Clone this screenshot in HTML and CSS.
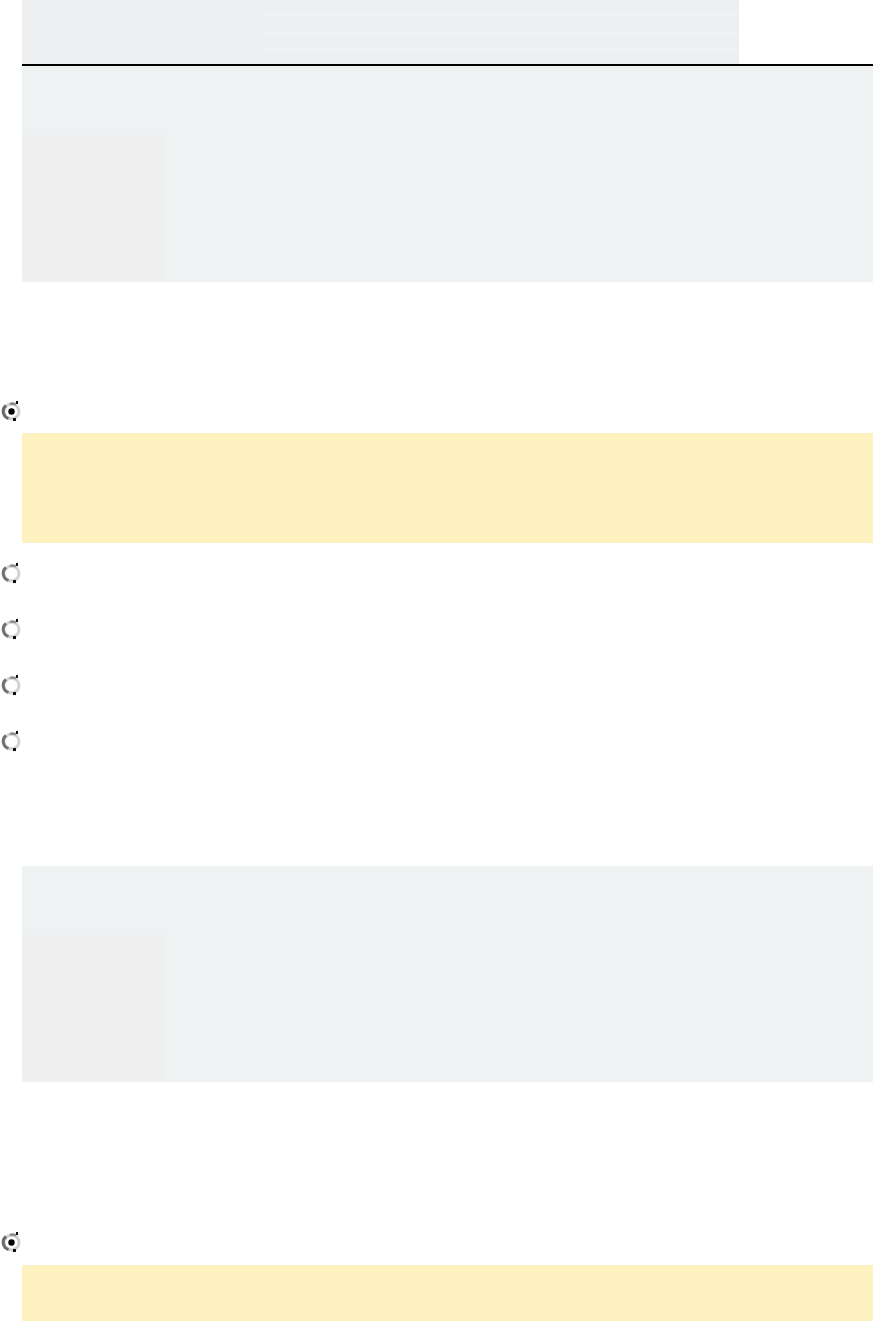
FILE: index.html
```html
<!DOCTYPE html>
<html lang="en">
<head>
<meta charset="utf-8">
<title>Page</title>
<link rel="stylesheet" href="styles.css">
</head>
<body>
<div class="page">
  <div class="top">
    <div class="top-left"></div>
    <div class="top-rows">
      <div class="top-row"></div>
      <div class="top-row"></div>
      <div class="top-row"></div>
      <div class="top-row last"></div>
    </div>
  </div>
  <div class="rule"></div>

  <div class="panel"><div class="thumb"></div></div>

  <div class="radio-row first">
    <svg class="radio" viewBox="0 0 20 20" width="20" height="20"><circle cx="10.5" cy="10.5" r="7.5" fill="#fff" stroke="#cfcfcf" stroke-width="3"/><path d="M5 4.5 A7.5 7.5 0 0 0 7.5 17.5" fill="none" stroke="#6a6a6a" stroke-width="3"/><path d="M15 3.5 A7.5 7.5 0 0 0 9 3" fill="none" stroke="#8a8a8a" stroke-width="2.5"/><circle cx="10.5" cy="10.5" r="3.2" fill="#000"/><rect x="15" y="0" width="2" height="3" fill="#111"/><rect x="12" y="17" width="3" height="3" fill="#111"/></svg>
  </div>
  <div class="note"></div>

  <div class="radio-list">
    <div class="radio-row"><svg class="radio" viewBox="0 0 20 20" width="20" height="20"><circle cx="10.5" cy="10.5" r="7.5" fill="#fff" stroke="#d2d2d2" stroke-width="3"/><path d="M5 4.5 A7.5 7.5 0 0 0 7.5 17.5" fill="none" stroke="#727272" stroke-width="3"/><path d="M15 3.5 A7.5 7.5 0 0 0 9 3" fill="none" stroke="#8e8e8e" stroke-width="2.5"/><rect x="15" y="0" width="2" height="3" fill="#111"/><rect x="12" y="17" width="3" height="3" fill="#111"/></svg></div>
    <div class="radio-row"><svg class="radio" viewBox="0 0 20 20" width="20" height="20"><circle cx="10.5" cy="10.5" r="7.5" fill="#fff" stroke="#d2d2d2" stroke-width="3"/><path d="M5 4.5 A7.5 7.5 0 0 0 7.5 17.5" fill="none" stroke="#727272" stroke-width="3"/><path d="M15 3.5 A7.5 7.5 0 0 0 9 3" fill="none" stroke="#8e8e8e" stroke-width="2.5"/><rect x="15" y="0" width="2" height="3" fill="#111"/><rect x="12" y="17" width="3" height="3" fill="#111"/></svg></div>
    <div class="radio-row"><svg class="radio" viewBox="0 0 20 20" width="20" height="20"><circle cx="10.5" cy="10.5" r="7.5" fill="#fff" stroke="#d2d2d2" stroke-width="3"/><path d="M5 4.5 A7.5 7.5 0 0 0 7.5 17.5" fill="none" stroke="#727272" stroke-width="3"/><path d="M15 3.5 A7.5 7.5 0 0 0 9 3" fill="none" stroke="#8e8e8e" stroke-width="2.5"/><rect x="15" y="0" width="2" height="3" fill="#111"/><rect x="12" y="17" width="3" height="3" fill="#111"/></svg></div>
    <div class="radio-row"><svg class="radio" viewBox="0 0 20 20" width="20" height="20"><circle cx="10.5" cy="10.5" r="7.5" fill="#fff" stroke="#d2d2d2" stroke-width="3"/><path d="M5 4.5 A7.5 7.5 0 0 0 7.5 17.5" fill="none" stroke="#727272" stroke-width="3"/><path d="M15 3.5 A7.5 7.5 0 0 0 9 3" fill="none" stroke="#8e8e8e" stroke-width="2.5"/><rect x="15" y="0" width="2" height="3" fill="#111"/><rect x="12" y="17" width="3" height="3" fill="#111"/></svg></div>
  </div>

  <div class="panel second"><div class="thumb"></div></div>

  <div class="radio-row third">
    <svg class="radio" viewBox="0 0 20 20" width="20" height="20"><circle cx="10.5" cy="10.5" r="7.5" fill="#fff" stroke="#cfcfcf" stroke-width="3"/><path d="M5 4.5 A7.5 7.5 0 0 0 7.5 17.5" fill="none" stroke="#6a6a6a" stroke-width="3"/><path d="M15 3.5 A7.5 7.5 0 0 0 9 3" fill="none" stroke="#8a8a8a" stroke-width="2.5"/><circle cx="10.5" cy="10.5" r="3.2" fill="#000"/><rect x="15" y="0" width="2" height="3" fill="#111"/><rect x="12" y="17" width="3" height="3" fill="#111"/></svg>
  </div>
  <div class="note last"></div>
</div>
</body>
</html>
```
FILE: styles.css
```css
html, body {
  margin: 0;
  padding: 0;
  background: #ffffff;
  font-family: "Liberation Sans", Arial, sans-serif;
}

.page {
  display: flex;
  flex-direction: column;
}

.top {
  margin-left: 22px;
  width: 717px;
  height: 64px;
  background: #eeeff1;
  display: flex;
}

.top-left {
  width: 238px;
  flex: none;
}

.top-rows {
  flex: 1;
  display: flex;
  flex-direction: column;
}

.top-row {
  height: 16px;
  border-bottom: 1px solid #f2f3f5;
}

.top-row.last {
  border-bottom: none;
}

.rule {
  margin-left: 22px;
  height: 2px;
  background: #000;
}

.panel {
  margin-left: 22px;
  height: 216px;
  box-sizing: border-box;
  padding-top: 69px;
  padding-bottom: 3px;
  background: #eef2f3;
}

.panel.second {
  margin-top: 115px;
}

.thumb {
  width: 144px;
  height: 144px;
  background: #efefef;
}

.radio-row {
  height: 20px;
  padding-left: 1px;
  display: flex;
  align-items: center;
}

.radio {
  display: block;
}

.radio-row.first {
  margin-top: 119px;
}

.radio-row.third {
  margin-top: 150px;
}

.note {
  margin-left: 22px;
  margin-top: 12px;
  height: 110px;
  background: #fef1c0;
}

.note.last {
  height: 60px;
  margin-top: 13px;
}

.radio-list {
  display: flex;
  flex-direction: column;
  gap: 36px;
  margin-top: 20px;
}
```
